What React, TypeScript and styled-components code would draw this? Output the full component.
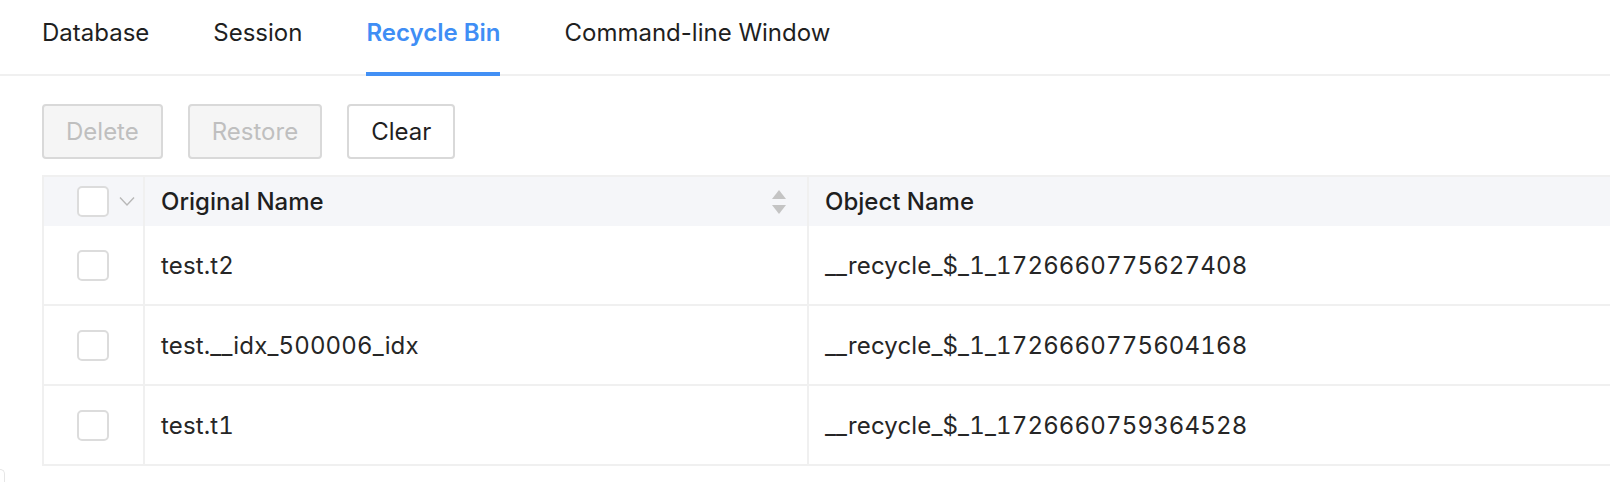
import React from "react";
import styled, { createGlobalStyle } from "styled-components";

const GlobalStyle = createGlobalStyle`
  html, body {
    margin: 0;
    padding: 0;
    background: #ffffff;
    font-family: Inter, "Noto Sans", "Liberation Sans", sans-serif;
    color: #262626;
    overflow: hidden;
  }
  * { box-sizing: border-box; }
`;

const Page = styled.div`
  width: 1610px;
  height: 482px;
  display: flex;
  flex-direction: column;
  overflow: hidden;

  & > * {
    flex-shrink: 0;
  }
`;

const TabBar = styled.div`
  display: flex;
  gap: 64px;
  height: 76px;
  padding-left: 42px;
  border-bottom: 2px solid #f0f0f0;
`;

const Tab = styled.div<{ $active?: boolean }>`
  position: relative;
  display: flex;
  align-items: center;
  height: 100%;
  padding-bottom: 10px;
  font-size: 24px;
  font-weight: ${(p) => (p.$active ? 600 : 400)};
  color: ${(p) => (p.$active ? "#3f8ef5" : "#1f1f1f")};
  cursor: pointer;

  &::after {
    content: "";
    display: ${(p) => (p.$active ? "block" : "none")};
    position: absolute;
    left: 0;
    right: 0;
    bottom: -2px;
    height: 4px;
    background: #4290f5;
  }
`;

const Toolbar = styled.div`
  display: flex;
  gap: 25px;
  padding: 28px 0 0 42px;
`;

const Button = styled.button`
  height: 55px;
  padding: 0 22px;
  font-family: inherit;
  font-size: 24px;
  border-radius: 4px;
  border: 2px solid #d9d9d9;
  background: #ffffff;
  color: #1f1f1f;
  cursor: pointer;

  &:disabled {
    background: #f5f5f5;
    color: #bfbfbf;
    cursor: not-allowed;
  }
`;

const Table = styled.div`
  margin: 16px 0 0 42px;
  width: 1600px;
  display: grid;
  grid-template-columns: 101px 664px 1fr;
  border-top: 2px solid #f0f0f0;
  border-left: 2px solid #f0f0f0;
`;

const HeadCell = styled.div<{ $last?: boolean }>`
  height: 49px;
  display: flex;
  align-items: center;
  justify-content: space-between;
  padding: 0 20px 0 16px;
  background: #f5f6f9;
  font-size: 24px;
  font-weight: 500;
  color: #1f1f1f;
  border-right: ${(p) => (p.$last ? "none" : "2px solid #f0f0f0")};
`;

const SelectCell = styled.div<{ $head?: boolean }>`
  height: ${(p) => (p.$head ? "49px" : "80px")};
  display: flex;
  align-items: center;
  gap: 10px;
  padding-left: 33px;
  background: ${(p) => (p.$head ? "#f5f6f9" : "#ffffff")};
  border-right: 2px solid #f0f0f0;
  border-bottom: ${(p) => (p.$head ? "none" : "2px solid #f0f0f0")};
`;

const Cell = styled.div<{ $last?: boolean }>`
  height: 80px;
  display: flex;
  align-items: center;
  padding-left: 16px;
  font-size: 24px;
  font-variant-numeric: tabular-nums;
  letter-spacing: 0.15px;
  color: #262626;
  border-right: ${(p) => (p.$last ? "none" : "2px solid #f0f0f0")};
  border-bottom: 2px solid #f0f0f0;
`;

const Checkbox = styled.span`
  width: 32px;
  height: 31px;
  border: 2px solid #dcdcdc;
  border-radius: 5px;
  background: #ffffff;
  flex-shrink: 0;
`;

const Corner = styled.div`
  margin-top: 3px;
  width: 5px;
  height: 20px;
  border-top: 1px solid #e6e6e6;
  border-right: 1px solid #e6e6e6;
  border-top-right-radius: 10px;
`;

const Chevron = () => (
  <svg width="16" height="11" viewBox="0 0 16 11" fill="none">
    <path d="M1 1.5 L8 9 L15 1.5" stroke="#b8b8b8" strokeWidth="1.4" />
  </svg>
);

const SortIcon = () => (
  <svg width="16" height="26" viewBox="0 0 16 26">
    <path d="M8 1 L15 10 L1 10 Z" fill="#c4c4c4" />
    <path d="M1 16 L15 16 L8 25 Z" fill="#c4c4c4" />
  </svg>
);

const tabs = ["Database", "Session", "Recycle Bin", "Command-line Window"];

const rows = [
  { original: "test.t2", object: "__recycle_$_1_1726660775627408" },
  { original: "test.__idx_500006_idx", object: "__recycle_$_1_1726660775604168" },
  { original: "test.t1", object: "__recycle_$_1_1726660759364528" },
];

export default function App() {
  return (
    <Page>
      <GlobalStyle />
      <TabBar>
        {tabs.map((t) => (
          <Tab key={t} $active={t === "Recycle Bin"}>
            {t}
          </Tab>
        ))}
      </TabBar>
      <Toolbar>
        <Button disabled>Delete</Button>
        <Button disabled>Restore</Button>
        <Button>Clear</Button>
      </Toolbar>
      <Table>
        <SelectCell $head>
          <Checkbox />
          <Chevron />
        </SelectCell>
        <HeadCell>
          <span>Original Name</span>
          <SortIcon />
        </HeadCell>
        <HeadCell $last>
          <span>Object Name</span>
        </HeadCell>
        {rows.map((r) => (
          <React.Fragment key={r.object}>
            <SelectCell>
              <Checkbox />
            </SelectCell>
            <Cell>{r.original}</Cell>
            <Cell $last>{r.object}</Cell>
          </React.Fragment>
        ))}
      </Table>
      <Corner />
    </Page>
  );
}
